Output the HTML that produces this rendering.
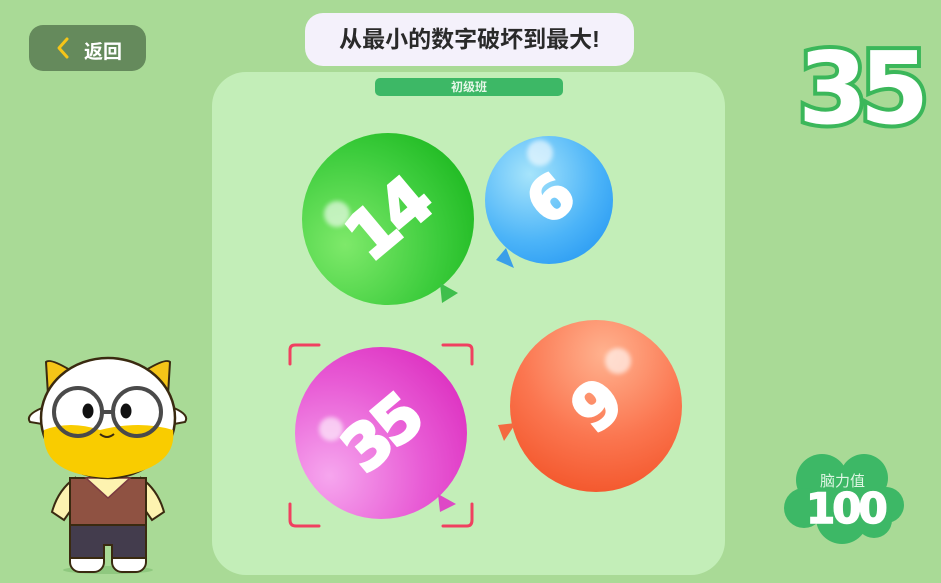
<!DOCTYPE html>
<html><head><meta charset="utf-8"><style>
body{margin:0;width:941px;height:583px;overflow:hidden;background:#a9da96;font-family:"Liberation Sans","Noto Sans CJK SC",sans-serif;position:relative}
.abs{position:absolute}
.back{left:29px;top:25px;width:117px;height:46px;background:#658a5c;border-radius:14px;color:#fff;font-size:19px;font-weight:bold}
.title{left:305px;top:13px;width:329px;height:53px;background:#f4f1fb;border-radius:18px;font-size:23px;font-weight:bold;color:#2a2a2a;text-align:center;line-height:53px}
.panel{left:212px;top:72px;width:513px;height:503px;background:#c3eeb8;border-radius:34px}
.lvl{left:375px;top:78px;width:188px;height:18px;background:#3db866;border-radius:5px;color:#e6f7e8;font-size:12px;font-weight:bold;text-align:center;line-height:18px}
.b{border-radius:50%;display:flex;align-items:center;justify-content:center;color:#fff;font-weight:900;font-family:"DejaVu Sans","Liberation Sans",sans-serif}
.b span{display:inline-block;-webkit-text-stroke:3px #fff;letter-spacing:-4px}
.hl{position:absolute;border-radius:50%;background:rgba(255,255,255,.6);filter:blur(2px)}
</style></head><body>
<div class="abs back"><svg class="abs" style="left:26px;top:11px" width="16" height="24"><path d="M12 3 L4 12 L12 21" stroke="#f5c518" stroke-width="3" fill="none" stroke-linecap="round" stroke-linejoin="round"/></svg><span class="abs" style="left:55px;top:12px">返回</span></div>
<div class="abs title">从最小的数字破坏到最大!</div>
<div class="abs panel"></div>
<div class="abs lvl">初级班</div>

<div class="abs b" style="left:302px;top:133px;width:172px;height:172px;background:radial-gradient(circle at 25% 65%,#7ee96a,#3ccc3c 55%,#10b014)"><span style="font-size:66px;transform:rotate(-40deg)">14</span><div class="hl" style="left:22px;top:68px;width:26px;height:26px"></div></div>
<svg class="abs" style="left:438px;top:283px" width="22" height="20"><path d="M2 0 L20 10 L4 20Z" fill="#3fbf4c"/></svg>

<div class="abs b" style="left:485px;top:136px;width:128px;height:128px;background:radial-gradient(circle at 35% 30%,#a6e4fb,#4cb4f8 55%,#1a8ff0)"><span style="font-size:58px;transform:rotate(-40deg)">6</span><div class="hl" style="left:42px;top:4px;width:26px;height:26px"></div></div>
<svg class="abs" style="left:496px;top:248px" width="20" height="20"><path d="M10 0 L0 12 L18 20Z" fill="#3a9fe8"/></svg>

<div class="abs b" style="left:295px;top:347px;width:172px;height:172px;background:radial-gradient(circle at 20% 75%,#f6a6ee,#e85bd5 50%,#d81fb8)"><span style="font-size:62px;transform:rotate(-40deg)">35</span><div class="hl" style="left:24px;top:70px;width:24px;height:24px"></div></div>
<svg class="abs" style="left:436px;top:494px" width="22" height="20"><path d="M2 0 L20 10 L4 18Z" fill="#de49c6"/></svg>
<svg class="abs" style="left:287px;top:342px" width="190" height="190" fill="none" stroke="#f04060" stroke-width="3" stroke-linecap="round"><path d="M3 22 V8 Q3 3 8 3 H32"/><path d="M156 3 H180 Q185 3 185 8 V22"/><path d="M3 162 V178 Q3 184 9 184 H32"/><path d="M156 184 H180 Q185 184 185 178 V162"/></svg>

<div class="abs b" style="left:510px;top:320px;width:172px;height:172px;background:radial-gradient(circle at 55% 20%,#ffb28f,#fb7650 50%,#f04a1d)"><span style="font-size:62px;transform:rotate(-40deg)">9</span><div class="hl" style="left:95px;top:28px;width:26px;height:26px"></div></div>
<svg class="abs" style="left:498px;top:421px" width="20" height="22"><path d="M18 2 L0 4 L6 20Z" fill="#f46a40"/></svg>

<div class="abs" style="left:798px;top:34px;font-size:100px;font-weight:bold;font-family:'DejaVu Sans',sans-serif;color:#fff;-webkit-text-stroke:8px #3bb75a;paint-order:stroke fill;letter-spacing:-8px;line-height:110px">35</div>

<svg class="abs" style="left:782px;top:450px" width="125" height="95"><g fill="#3db866"><circle cx="40" cy="30" r="26"/><circle cx="82" cy="28" r="24"/><circle cx="104" cy="55" r="18"/><circle cx="22" cy="58" r="20"/><circle cx="60" cy="68" r="26"/><circle cx="92" cy="70" r="18"/></g></svg>
<div class="abs" style="left:820px;top:470px;font-size:15px;color:#dff6e4">脑力值</div>
<div class="abs" style="left:806px;top:484px;font-size:42px;font-weight:900;color:#fff;font-family:'DejaVu Sans',sans-serif;letter-spacing:-3px;-webkit-text-stroke:1.5px #fff">100</div>

<svg class="abs" style="left:0;top:330px" width="200" height="253">
<ellipse cx="108" cy="240" rx="45" ry="4" fill="#8fc87f"/>
<path d="M48 65 L46 32 Q50 28 70 40Z M168 65 L170 32 Q166 28 146 40Z" fill="#f5c518" stroke="#3a2a10" stroke-width="2"/>
<path d="M42 78 Q25 85 30 92 L42 94Z M174 78 Q190 85 185 92 L174 94Z" fill="#fff" stroke="#3a2a10" stroke-width="2"/>
<path d="M75 148 Q58 160 52 182 L64 190 L78 170Z M141 148 Q158 160 164 182 L152 190 L138 170Z" fill="#fdf3b0" stroke="#3a2a10" stroke-width="2"/>
<rect x="70" y="218" width="34" height="24" rx="10" fill="#fff" stroke="#3a2a10" stroke-width="2"/><rect x="112" y="218" width="34" height="24" rx="10" fill="#fff" stroke="#3a2a10" stroke-width="2"/>
<path d="M70 190 V228 H104 V215 H112 V228 H146 V190Z" fill="#433c4d" stroke="#3a2a10" stroke-width="2"/>
<path d="M70 148 H146 V195 H70Z" fill="#8f5242" stroke="#3a2a10" stroke-width="2"/>
<path d="M86 148 L108 168 L130 148Z" fill="#fdf3b0" stroke="#7a3a40" stroke-width="1.5"/>
<ellipse cx="108" cy="88" rx="67" ry="60" fill="#fff" stroke="#3a2a10" stroke-width="2.5"/>
<path d="M44 100 Q70 90 100 100 Q140 90 173 100 Q178 140 108 148 Q40 145 44 100Z" fill="#f9cc00"/>
<circle cx="78" cy="82" r="24" fill="none" stroke="#4a4a4a" stroke-width="4"/><circle cx="137" cy="82" r="24" fill="none" stroke="#4a4a4a" stroke-width="4"/>
<path d="M102 82 H113" stroke="#4a4a4a" stroke-width="4"/>
<ellipse cx="88" cy="81" rx="5.5" ry="7.5" fill="#111"/><ellipse cx="126" cy="81" rx="5.5" ry="7.5" fill="#111"/>
<path d="M100 104 Q107 110 114 104" stroke="#3a2a10" stroke-width="2" fill="none"/>
</svg>
</body></html>
